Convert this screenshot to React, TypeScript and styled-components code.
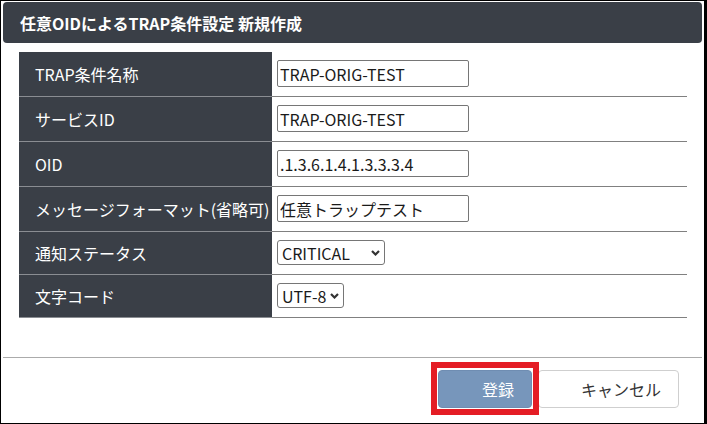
import styled, { createGlobalStyle } from "styled-components";

const GlobalStyle = createGlobalStyle`
  html, body {
    margin: 0;
    padding: 0;
    background: #000;
  }
  body {
    font-family: "Noto Sans CJK JP", "Noto Sans", sans-serif;
  }
`;

const Dialog = styled.div`
  width: 703px;
  height: 422px;
  margin: 1px 0 0 1px;
  padding: 1px 2px 0 2px;
  box-sizing: border-box;
  background: #fff;
  display: flex;
  flex-direction: column;
`;

const Header = styled.div`
  height: 41px;
  flex: none;
  display: flex;
  align-items: center;
  padding-left: 17px;
  background: #3a3f47;
  border-radius: 4px;
  color: #fff;
  font-size: 16px;
  font-weight: 700;
  line-height: 1;
`;

const Content = styled.div`
  padding: 9px 15px 0 16px;
`;

const Table = styled.div`
  display: grid;
  grid-template-columns: 253px 1fr;
`;

const LabelCell = styled.div`
  display: flex;
  align-items: center;
  padding-left: 16px;
  background: #3a3f47;
  border-bottom: 1px solid #8a8d92;
  color: #fff;
  font-size: 16px;
  line-height: 1;
  white-space: nowrap;
`;

const ValueCell = styled.div`
  display: flex;
  align-items: center;
  padding: 8px 5px 9px;
  border-bottom: 1px solid #808080;
`;

const TextInput = styled.input`
  width: 192px;
  height: 27px;
  box-sizing: border-box;
  padding: 1px 2px;
  border: 1px solid #767676;
  border-radius: 2px;
  font-family: inherit;
  font-size: 16px;
  color: #1a1a1a;
  outline: none;
`;

const SelectWrap = styled.div`
  position: relative;
  display: inline-flex;
`;

const Select = styled.select<{ $width: number }>`
  appearance: none;
  width: ${(p) => p.$width}px;
  height: 25px;
  box-sizing: border-box;
  padding: 0 0 0 4px;
  border: 1px solid #767676;
  border-radius: 3px;
  background: #fff;
  font-family: inherit;
  font-size: 16px;
  color: #1a1a1a;
  outline: none;
`;

const Chevron = styled.svg`
  position: absolute;
  right: 5px;
  top: 50%;
  margin-top: -3px;
  pointer-events: none;
`;

const Footer = styled.div`
  margin-top: 39px;
  border-top: 1px solid #ababab;
  padding: 12px 23px 0 0;
  display: flex;
  justify-content: flex-end;
  gap: 6px;
`;

const Highlight = styled.span`
  position: relative;
  display: inline-flex;

  &::after {
    content: "";
    position: absolute;
    inset: -8px -7px -7px -7px;
    border: 6px solid #e41d25;
    pointer-events: none;
  }
`;

const Button = styled.button<{ $width: number; $primary?: boolean }>`
  width: ${(p) => p.$width}px;
  height: 38px;
  box-sizing: border-box;
  padding: 0 17px 0 0;
  text-align: right;
  border-radius: 4px;
  border: 1px solid ${(p) => (p.$primary ? "#6f8db2" : "#cfcfcf")};
  background: ${(p) => (p.$primary ? "#7796bb" : "#fff")};
  color: ${(p) => (p.$primary ? "#fff" : "#333")};
  font-family: inherit;
  font-size: 16px;
  line-height: 1;
`;

const ChevronIcon = () => (
  <Chevron width="9" height="6" viewBox="0 0 9 6">
    <path d="M1 1 L4.5 4.5 L8 1" fill="none" stroke="#333" strokeWidth="2.2" />
  </Chevron>
);

const textRows = [
  { label: "TRAP条件名称", value: "TRAP-ORIG-TEST" },
  { label: "サービスID", value: "TRAP-ORIG-TEST" },
  { label: "OID", value: ".1.3.6.1.4.1.3.3.3.4" },
  { label: "メッセージフォーマット(省略可)", value: "任意トラップテスト" },
];

export default function App() {
  return (
    <>
      <GlobalStyle />
      <Dialog>
        <Header>任意OIDによるTRAP条件設定 新規作成</Header>
        <Content>
          <Table>
            {textRows.map((r) => [
              <LabelCell key={r.label + "l"}>{r.label}</LabelCell>,
              <ValueCell key={r.label + "v"}>
                <TextInput defaultValue={r.value} />
              </ValueCell>,
            ])}
            <LabelCell>通知ステータス</LabelCell>
            <ValueCell>
              <SelectWrap>
                <Select $width={108} defaultValue="CRITICAL">
                  <option>CRITICAL</option>
                  <option>WARNING</option>
                  <option>NORMAL</option>
                </Select>
                <ChevronIcon />
              </SelectWrap>
            </ValueCell>
            <LabelCell>文字コード</LabelCell>
            <ValueCell>
              <SelectWrap>
                <Select $width={67} defaultValue="UTF-8">
                  <option>UTF-8</option>
                  <option>SJIS</option>
                </Select>
                <ChevronIcon />
              </SelectWrap>
            </ValueCell>
          </Table>
        </Content>
        <Footer>
          <Highlight>
            <Button $width={94} $primary>
              登録
            </Button>
          </Highlight>
          <Button $width={141}>キャンセル</Button>
        </Footer>
      </Dialog>
    </>
  );
}
